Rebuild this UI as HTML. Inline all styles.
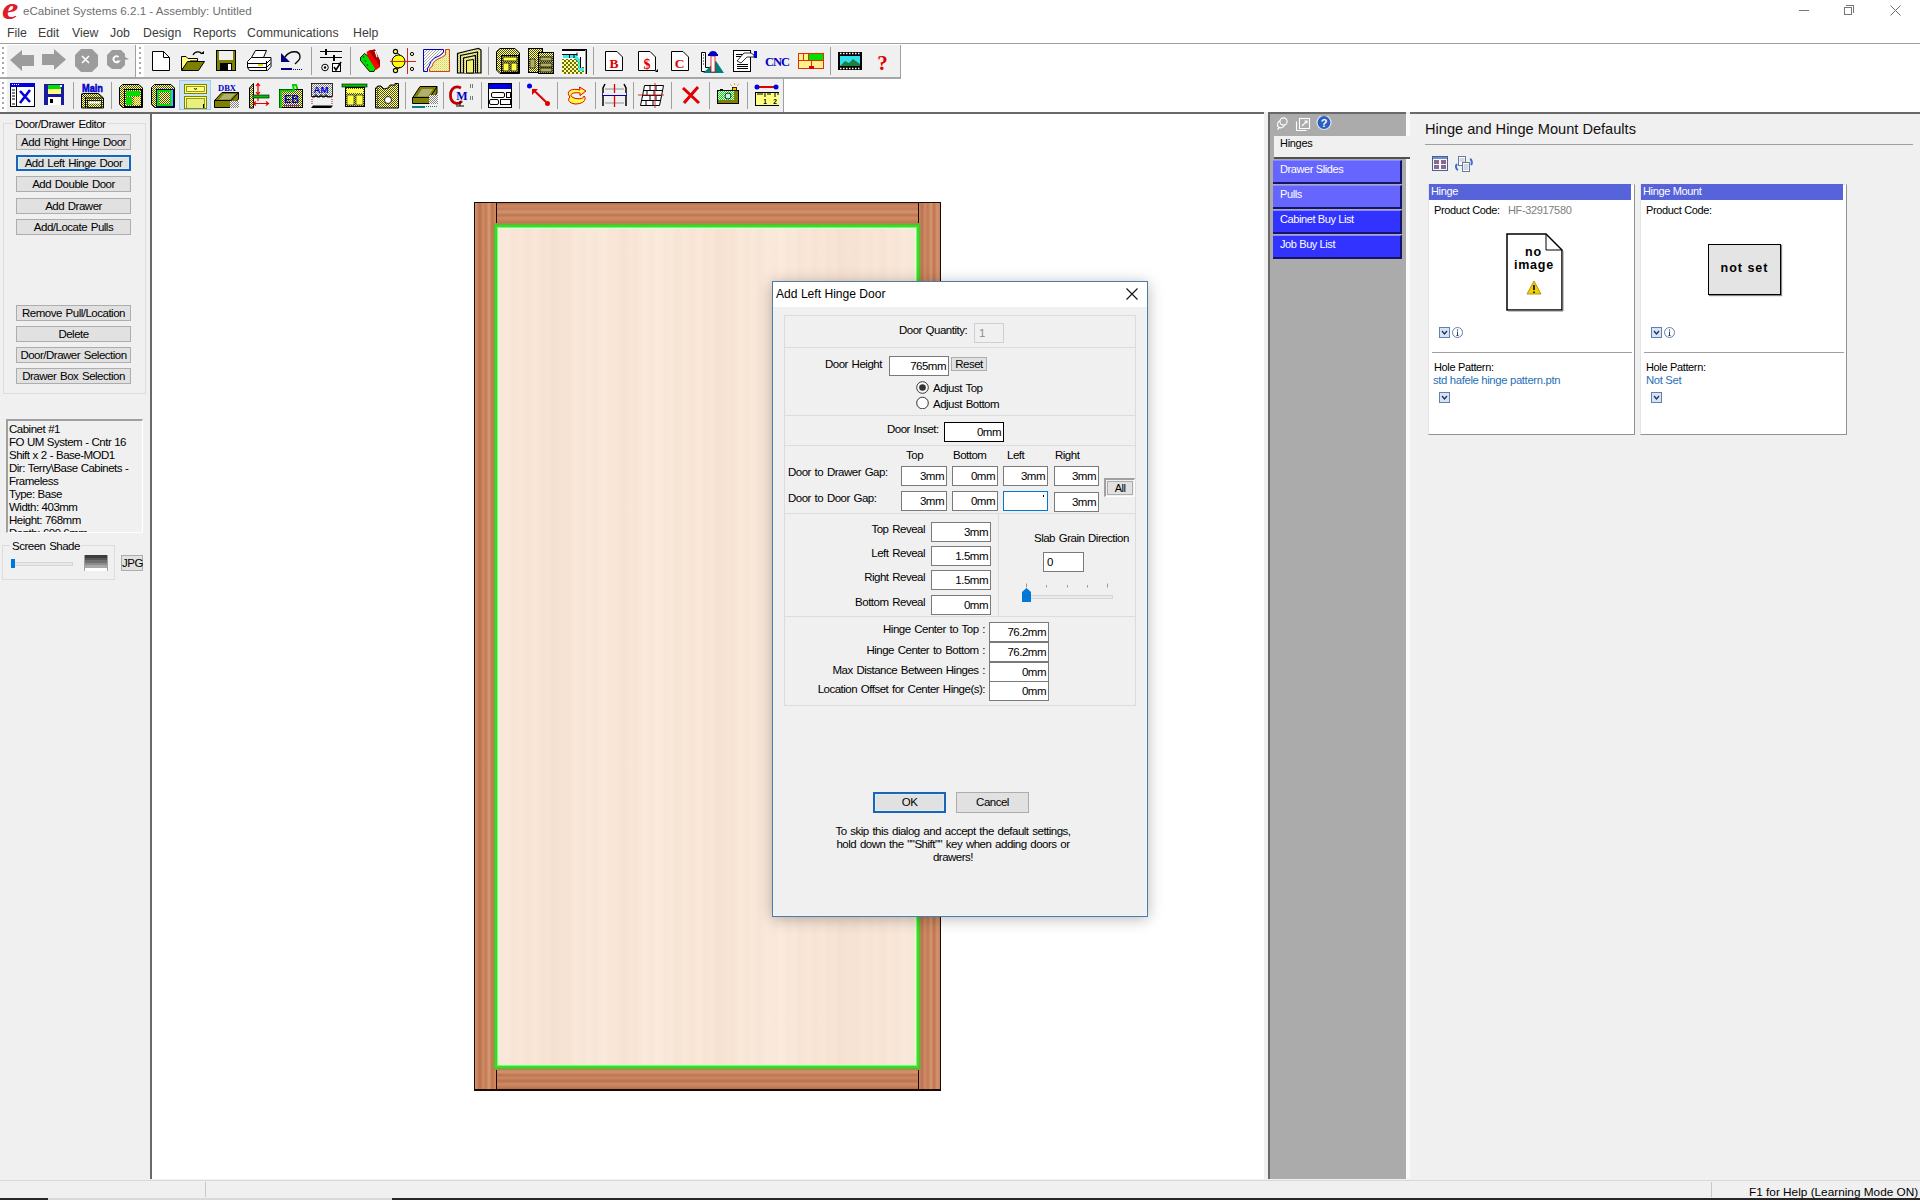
<!DOCTYPE html>
<html><head><meta charset="utf-8">
<style>
*{margin:0;padding:0;box-sizing:border-box}
html,body{width:1920px;height:1200px;overflow:hidden;background:#fff;font-family:"Liberation Sans",sans-serif;color:#000}
.a{position:absolute}
.ms{font-size:11.5px;letter-spacing:-0.5px;word-spacing:1px;line-height:13px;white-space:nowrap;margin-top:1px}
.btn{position:absolute;background:#e1e1e1;border:1px solid #adadad;font-size:11.5px;letter-spacing:-0.5px;word-spacing:1px;text-align:center;white-space:nowrap}
.tb{position:absolute;background:#fff;border:1px solid #7a7a7a;font-size:11.5px;letter-spacing:-0.5px;text-align:right;padding-right:2px;white-space:nowrap}
.sep{position:absolute;width:2px;border-left:1px solid #a0a0a0;border-right:1px solid #fff}
.bluebtn{position:absolute;left:1273px;width:129px;height:24px;color:#fff;font-size:11px;letter-spacing:-0.4px;padding-left:7px;line-height:16px;border-top:1px solid #8a8aff;border-bottom:2px solid #14146a;border-right:2px solid #14146a}
.card{position:absolute;background:#fff;border:1px solid #e4e4e4;border-right:1px solid #929292;border-bottom:1px solid #929292}
.t8{font-size:11px;letter-spacing:-0.35px;white-space:nowrap}
</style></head><body>
<!-- title bar -->
<div class="a" style="left:0;top:0;width:1920px;height:43px;background:#fff"></div>
<div class="a" style="left:2px;top:-7px;font-family:'Liberation Serif',serif;font-weight:bold;font-style:italic;font-size:32px;line-height:30px;color:#e01c2a;transform:scaleX(1.15);transform-origin:0 0">e</div>
<div class="a" style="left:23px;top:4px;font-size:11.6px;color:#6e6e6e;white-space:nowrap">eCabinet Systems 6.2.1 - Assembly: Untitled</div>
<!-- window buttons -->
<div class="a" style="left:1799px;top:10px;width:10px;height:1px;background:#777"></div>
<div class="a" style="left:1844px;top:7px;width:8px;height:8px;border:1px solid #777;background:#fff;z-index:1"></div>
<div class="a" style="left:1846px;top:5px;width:8px;height:8px;border-top:1px solid #777;border-right:1px solid #777"></div>
<svg class="a" style="left:1890px;top:5px" width="11" height="11"><path d="M0.5 0.5L10.5 10.5M10.5 0.5L0.5 10.5" stroke="#707070" stroke-width="1"/></svg>
<!-- menu -->
<div class="a" style="top:26px;font-size:12.3px;color:#3c3c3c;white-space:nowrap;left:-1px;width:400px">
<span class="a" style="left:8px">File</span><span class="a" style="left:39px">Edit</span><span class="a" style="left:73px">View</span><span class="a" style="left:111px">Job</span><span class="a" style="left:144px">Design</span><span class="a" style="left:194px">Reports</span><span class="a" style="left:248px">Communications</span><span class="a" style="left:354px">Help</span>
</div>
<div class="a" style="left:0;top:43px;width:1920px;height:1px;background:#a0a0a0"></div>

<!-- toolbars -->
<div id="toolbars">
<svg class="a" style="left:0;top:0" width="910" height="115" viewBox="0 0 910 115">
<defs>
<pattern id="dy" width="2" height="2" patternUnits="userSpaceOnUse"><rect width="2" height="2" fill="#ffffa8"/><rect width="1" height="1" fill="#505000"/><rect x="1" y="1" width="1" height="1" fill="#505000"/></pattern>
<pattern id="dy2" width="2" height="2" patternUnits="userSpaceOnUse"><rect width="2" height="2" fill="#ffff60"/><rect width="1" height="1" fill="#a0a040"/><rect x="1" y="1" width="1" height="1" fill="#c0c060"/></pattern>
<pattern id="dg" width="2" height="2" patternUnits="userSpaceOnUse"><rect width="2" height="2" fill="#fff"/><rect width="1" height="1" fill="#808080"/><rect x="1" y="1" width="1" height="1" fill="#808080"/></pattern>
<pattern id="dgr" width="2" height="2" patternUnits="userSpaceOnUse"><rect width="2" height="2" fill="#00e000"/><rect width="1" height="1" fill="#fff"/><rect x="1" y="1" width="1" height="1" fill="#fff"/></pattern>
<pattern id="hatch" width="3" height="3" patternUnits="userSpaceOnUse"><rect width="3" height="3" fill="#fff"/><path d="M0 3 L3 0" stroke="#9a9a9a" stroke-width="0.9"/></pattern>
<pattern id="dly" width="2" height="2" patternUnits="userSpaceOnUse"><rect width="2" height="2" fill="#ffff90"/><rect width="1" height="1" fill="#c8c890"/><rect x="1" y="1" width="1" height="1" fill="#e0e0b0"/></pattern>
<pattern id="dck" width="4" height="4" patternUnits="userSpaceOnUse"><rect width="4" height="4" fill="#ffffa0"/><rect width="2" height="2" fill="#707000"/><rect x="2" y="2" width="2" height="2" fill="#707000"/></pattern>
<pattern id="dol" width="2" height="2" patternUnits="userSpaceOnUse"><rect width="2" height="2" fill="#808000"/><rect width="1" height="1" fill="#b0b060"/></pattern>
</defs>
<!-- band backgrounds -->
<rect x="7" y="45" width="128" height="32" fill="#f0f0f0"/>
<rect x="144" y="45" width="756" height="32" fill="#f0f0f0"/>
<rect x="0" y="77" width="901" height="2" fill="#a6a6a6"/>
<rect x="135" y="45" width="1" height="32" fill="#a0a0a0"/>
<rect x="900" y="45" width="1" height="33" fill="#a0a0a0"/>
<rect x="7" y="79" width="776" height="33" fill="#f0f0f0"/>
<rect x="783" y="79" width="1" height="33" fill="#a0a0a0"/>
<!-- grippers -->
<g fill="#a8a8a8">
<rect x="2" y="47" width="2" height="2"/><rect x="2" y="52" width="2" height="2"/><rect x="2" y="57" width="2" height="2"/><rect x="2" y="62" width="2" height="2"/><rect x="2" y="67" width="2" height="2"/><rect x="2" y="72" width="2" height="2"/>
<rect x="139" y="47" width="2" height="2"/><rect x="139" y="52" width="2" height="2"/><rect x="139" y="57" width="2" height="2"/><rect x="139" y="62" width="2" height="2"/><rect x="139" y="67" width="2" height="2"/><rect x="139" y="72" width="2" height="2"/>
<rect x="2" y="82" width="2" height="2"/><rect x="2" y="87" width="2" height="2"/><rect x="2" y="92" width="2" height="2"/><rect x="2" y="97" width="2" height="2"/><rect x="2" y="102" width="2" height="2"/><rect x="2" y="107" width="2" height="2"/>
</g>
<!-- separators row1 -->
<g fill="#a0a0a0">
<rect x="311" y="47" width="1" height="28"/><rect x="350" y="47" width="1" height="28"/><rect x="488" y="47" width="1" height="28"/><rect x="593" y="47" width="1" height="28"/><rect x="830" y="47" width="1" height="28"/>
<rect x="73" y="82" width="1" height="27"/><rect x="111" y="82" width="1" height="27"/><rect x="405" y="82" width="1" height="27"/><rect x="443" y="82" width="1" height="27"/><rect x="481" y="82" width="1" height="27"/><rect x="519" y="82" width="1" height="27"/><rect x="557" y="82" width="1" height="27"/><rect x="595" y="82" width="1" height="27"/><rect x="633" y="82" width="1" height="27"/><rect x="671" y="82" width="1" height="27"/><rect x="709" y="82" width="1" height="27"/><rect x="747" y="82" width="1" height="27"/>
</g>
<!-- nav icons (disabled gray) -->
<g fill="#9c9c9c">
<path d="M10 60 L22 50 V55 H34 V66 H22 V71 Z"/>
<path d="M42 54 H54 V49 L66 59.5 L54 70 V65 H42 Z"/>
<path d="M81 49 H92 L98 55 V66 L92 72 H81 L75 66 V55 Z"/>
<path d="M112 50 H121 L125 54 V57 L129 59 L125 60 V65 L121 69 H112 L107 65 V55 Z"/>
</g>
<path d="M82 56 L89 63 M89 56 L82 63" stroke="#fff" stroke-width="1.6"/>
<path d="M118.5 57 A3 3 0 1 0 118.5 61.5 H116.5" stroke="#fff" stroke-width="1.8" fill="none"/>
<!-- new doc -->
<path d="M152.5 51.5 H163.5 L169.5 57.5 V70.5 H152.5 Z" fill="#fff" stroke="#000"/>
<path d="M163.5 51.5 V57.5 H169.5" fill="none" stroke="#000"/>
<!-- open folder -->
<path d="M181.5 56.5 H186 L188 58.5 H197.5 V61 H190 L181.5 70 Z" fill="#ffff80" stroke="#000"/>
<path d="M181.5 70.5 L187.5 61.5 H204.5 L198.5 70.5 Z" fill="#808000" stroke="#000"/>
<path d="M193 55 C195 51 200 51 202 54" fill="none" stroke="#000" stroke-width="1.2"/><path d="M200 54 H204 V51 Z" fill="#000"/>
<!-- save -->
<rect x="216.5" y="50.5" width="19" height="20" fill="#808000" stroke="#000"/>
<rect x="219" y="51" width="14" height="9" fill="#f0f0f0"/>
<rect x="220" y="63" width="12" height="7" fill="#000"/><rect x="228" y="64" width="3" height="6" fill="#fff"/>
<!-- printer -->
<path d="M255.5 50.5 H266.5 L263.5 57.5 H251.5 Z" fill="#fff" stroke="#000"/>
<path d="M247.5 61.5 L251.5 57.5 H271 V66.5 L267.5 70.5 H249.5 L247.5 67.5 Z" fill="#fff" stroke="#000"/>
<path d="M247.5 63.5 H266.5 L270.5 59.5 M247.5 67.5 H266.5 L270.5 63.5 M266.5 61 V70" fill="none" stroke="#000"/>
<rect x="258" y="64" width="5" height="2" fill="#e0e000"/>
<!-- undo -->
<path d="M285 57 C290 50 300 50 300 57 C300 60 297 62 295 64" fill="none" stroke="#000" stroke-width="1.3"/>
<path d="M281 53 V62 H290 Z" fill="#000080"/>
<rect x="281" y="68" width="11" height="2" fill="#000080"/>
<path d="M293 69.5 H302" stroke="#000080" stroke-width="1" stroke-dasharray="1 1"/>
<!-- settings -->
<path d="M320 51.5 H342 M320 57.5 H342" stroke="#000" stroke-width="1"/>
<rect x="325" y="49" width="2" height="6" fill="#000"/><rect x="333" y="55" width="2" height="6" fill="#000"/>
<circle cx="325" cy="67.5" r="3.3" fill="#fff" stroke="#000" stroke-width="1"/><circle cx="325" cy="67.5" r="1.2" fill="#000"/>
<rect x="332.5" y="63.5" width="8" height="8" fill="#fff" stroke="#000"/><path d="M334 67 L336 70 L341 62" stroke="#000" stroke-width="1.6" fill="none"/>
<!-- red green -->
<path d="M360.5 57.5 L364.5 53.5 L368 56 L376 68 L374 71.5 L369.5 71.5 L360.5 60.5 Z" fill="#00e000" stroke="#000" stroke-width="0.9"/>
<path d="M363 56 L364 58 M365 60 L366 62 M367 64 L368 66" stroke="#000" stroke-width="0.7"/>
<path d="M366.5 52 L369 50.5 L375 49.5 L380 61 L380 67 L376 70 L368 57 Z" fill="#ff0000"/>
<path d="M369 50.5 L375 49.5 L380 61 L380 67 L377 62 Z" fill="#a00000"/>
<path d="M374.5 51 L376 51 L377.5 57 L376.5 57.5 Z" fill="#fff"/>
<!-- sun crosshair -->
<circle cx="398.5" cy="61.5" r="6.5" fill="#ffff00" stroke="#000"/>
<path d="M396 52 L400 55 M396 70 L400 67" stroke="#000" stroke-width="1"/>
<circle cx="395.5" cy="51.5" r="2.1" fill="#ffff40" stroke="#000" stroke-width="1.1"/><circle cx="395.5" cy="70.5" r="2.1" fill="#ffff40" stroke="#000" stroke-width="1.1"/>
<path d="M390 61.5 H416 M407.5 48 V74" stroke="#c82828" stroke-width="1"/>
<circle cx="412" cy="54" r="1.6" fill="#ffffa0" stroke="#000" stroke-width="1"/><circle cx="412" cy="69" r="1.6" fill="#ffffa0" stroke="#000" stroke-width="1"/>
<!-- moulding -->
<path d="M423.5 49.5 H443.5 V52.5 L440 55.5 L434.5 58 L431 61.5 L429 66 L427.5 68.5 V71.5 H423.5 Z" fill="url(#hatch)" stroke="#0000c0"/>
<path d="M445.5 49.5 H449.5 V71.5 H429.5 V68.5 L432 66.5 L433.5 62.5 L437 59.5 L441.5 57.5 L445.5 55 Z" fill="url(#dly)" stroke="#d04010"/>
<!-- door frame -->
<path d="M457.5 73 V53.5 L469 50.5 L478.5 48.5 L481 50 V73 Z" fill="url(#dly)" stroke="#000" stroke-width="1.2"/>
<path d="M460.5 73 V55.5 L477.5 52 V73" fill="none" stroke="#000" stroke-width="1.2"/>
<path d="M463.5 73 V58 L475.5 55.5 V73" fill="url(#dly)" stroke="#000" stroke-width="1.2"/>
<path d="M466.5 73 V60.5 L473.5 59.5 V73 Z" fill="#f4f070" stroke="#000" stroke-width="1"/>
<!-- cabinet -->
<path d="M496.5 51.5 L500 48.5 H515 L519.5 53 V73.5 H500 L496.5 70 Z" fill="url(#dy)" stroke="#000"/>
<rect x="501.5" y="55.5" width="17" height="17" fill="url(#dy)" stroke="#000"/>
<rect x="503" y="57" width="14" height="4" fill="#ffff40" stroke="#000" stroke-width="0.8"/>
<rect x="503" y="63" width="6" height="8" fill="#ffff40" stroke="#000" stroke-width="0.8"/><rect x="511" y="63" width="6" height="8" fill="#ffff40" stroke="#000" stroke-width="0.8"/>
<!-- two cabinets -->
<rect x="528.5" y="48.5" width="14" height="24" fill="url(#dy)" stroke="#000"/>
<rect x="538.5" y="52.5" width="15" height="21" fill="url(#dy)" stroke="#000"/>
<rect x="540" y="57" width="12" height="4" fill="#b0b060" stroke="#000" stroke-width="0.8"/><rect x="540" y="63" width="12" height="4" fill="#b0b060" stroke="#000" stroke-width="0.8"/><rect x="540" y="68" width="12" height="4" fill="#b0b060" stroke="#000" stroke-width="0.8"/>
<rect x="530" y="59" width="5" height="9" fill="#b0b060" stroke="#000" stroke-width="0.6"/>
<!-- corner -->
<rect x="562" y="49" width="25" height="25" fill="#000"/>
<rect x="562" y="51" width="23" height="23" fill="#fff"/>
<rect x="562" y="59" width="22" height="15" fill="url(#dck)"/>
<rect x="585" y="50" width="1" height="24" fill="#9a9a9a"/>
<rect x="563" y="52" width="6" height="2" fill="#fff"/><path d="M562 54.5 H577" stroke="#000" stroke-width="1"/>
<path d="M563 56.5 H575 L580 61.5 V69.5 H584" stroke="#30f0f0" stroke-width="3" fill="none"/>
<path d="M569.5 55 V58 M574 55 V58" stroke="#000" stroke-width="1"/>
<rect x="581" y="57" width="3" height="10" fill="#fff"/><path d="M580.5 57 V68 M577 52.5 V56" stroke="#000" stroke-width="1"/>
<!-- B $ C docs -->
<g fill="#fff" stroke="#000">
<path d="M605.5 51.5 H617 L622.5 57 V70.5 H605.5 Z"/><path d="M638.5 51.5 H650 L655.5 57 V70.5 H638.5 Z"/><path d="M671.5 51.5 H683 L688.5 57 V70.5 H671.5 Z"/>
</g>
<g font-family="Liberation Serif" font-weight="bold" fill="#e00000" text-anchor="middle">
<text x="614" y="68" font-size="13.5">B</text><text x="647" y="68.5" font-size="14">$</text><text x="679.5" y="68" font-size="13.5">C</text>
</g>
<path d="M655 72 L658 69 V72 Z" fill="#000"/>
<!-- square ruler + pillar -->
<path d="M701.5 52.5 H705.5 V67.5 H712 V71.5 H701.5 Z" fill="#fff" stroke="#000"/>
<path d="M703 55H704M703 58H704M703 61H704M703 64H704" stroke="#000"/>
<path d="M703 73 L716 61 L724 73 Z" fill="#008080"/>
<rect x="711" y="56" width="4" height="16" fill="#fff" stroke="#e00000" stroke-width="0.8"/>
<path d="M709 54 C709 50 717 50 717 54 V56 H709 Z" fill="#0000c0"/>
<rect x="708" y="54" width="10" height="2" fill="#0000c0"/>
<!-- edit doc hand -->
<rect x="733.5" y="50.5" width="17" height="21" fill="#fff" stroke="#000"/>
<path d="M736 54.5H743M736 56.5H741M737 64.5H748M737 66.5H748M737 68.5H748" stroke="#000"/>
<path d="M737 61 L744 53 H751 L754 55 V57 H747 L741 63 Z" fill="#fff" stroke="#000" stroke-width="0.8"/>
<rect x="754" y="51" width="3" height="7" fill="#0000e0"/>
<!-- CNC -->
<text x="777.5" y="65.5" font-family="Liberation Serif" font-weight="bold" font-size="12.5" fill="#0000c0" text-anchor="middle" textLength="25">CNC</text>
<!-- layout -->
<rect x="798.5" y="53.5" width="25" height="15" fill="#fff090" stroke="#e03000"/>
<rect x="809" y="54" width="14" height="6" fill="#00e000"/>
<path d="M798 60.5 H824 M803.5 54 V60 M808.5 54 V60 M811.5 61 V67" stroke="#e03000" stroke-width="1"/>
<rect x="809" y="66" width="5" height="3" fill="#e00000"/>
<!-- film -->
<rect x="838" y="52" width="24" height="18" fill="#000"/>
<rect x="840" y="56" width="20" height="10" fill="#30e0f0"/>
<path d="M840 66 L845 61 L849 63 L853 59 L860 64 V66 Z" fill="#208040"/>
<path d="M840 53.5 H860 M840 68.5 H860" stroke="#fff" stroke-width="1.4" stroke-dasharray="1.5 1.5"/>
<!-- ? -->
<text x="882.5" y="69.5" font-family="Liberation Serif" font-weight="bold" font-size="21" fill="#e00000" text-anchor="middle">?</text>

<!-- row 2 -->
<!-- highlighted button bg -->
<rect x="179.5" y="80.5" width="31" height="29" fill="#cde3f6" stroke="#a4cbef"/>
<!-- X window -->
<rect x="10.5" y="83.5" width="24" height="23" fill="#fff" stroke="#000"/>
<rect x="10" y="83" width="25" height="4" fill="#0000e0"/>
<path d="M12 84.5H13M14 84.5H15M16 84.5H17M18 84.5H19" stroke="#fff"/>
<path d="M16.5 87 V106" stroke="#000"/><path d="M12 90H15M12 93H15M12 96H15M12 99H15M12 104H15" stroke="#000"/>
<path d="M20 91 L30 102 M30 90 L20 103" stroke="#0000e0" stroke-width="2.6"/>
<!-- blue floppy -->
<rect x="44" y="84" width="20" height="21" fill="#1a1aa0"/>
<rect x="48" y="85" width="13" height="4" fill="#00e000"/><rect x="48" y="89" width="13" height="5" fill="#ffff80"/>
<rect x="48" y="97" width="13" height="8" fill="#fff"/><rect x="50" y="99" width="3" height="4" fill="#000"/>
<rect x="60" y="85" width="2" height="2" fill="#fff"/>
<!-- Main -->
<text x="92.5" y="91.5" font-family="Liberation Sans" font-weight="bold" font-size="11" fill="#0000c8" stroke="#0000c8" stroke-width="0.5" text-anchor="middle" textLength="21" lengthAdjust="spacingAndGlyphs">Main</text>
<path d="M81.5 108 V94 L82.5 93.5 H98.5 L103.5 98 V108 Z" fill="url(#dy)" stroke="#000"/>
<path d="M82 94 L86 98 H103 M85.5 98 V108" fill="none" stroke="#000"/>
<rect x="87.5" y="100.5" width="14" height="7" fill="url(#dy)" stroke="#000" stroke-width="0.8"/><rect x="88.5" y="101.5" width="12" height="2" fill="#fff"/>
<!-- cabinet 1 -->
<path d="M119.5 87.5 L122.5 84.5 H139 L142.5 88 V107.5 H122.5 L119.5 104.5 Z" fill="url(#dy)" stroke="#000"/>
<rect x="124.5" y="89.5" width="17" height="17" fill="url(#dy)" stroke="#000"/>
<rect x="126" y="91" width="14" height="5" fill="#00e000"/><rect x="126" y="97" width="6" height="8" fill="#00e000"/><rect x="134" y="97" width="6" height="8" fill="url(#dy2)"/>
<!-- cabinet 2 -->
<path d="M151.5 87.5 L154.5 84.5 H171 L174.5 88 V107.5 H154.5 L151.5 104.5 Z" fill="url(#dy)" stroke="#000"/>
<rect x="156.5" y="89.5" width="17" height="17" fill="#00e000" stroke="#000080"/>
<rect x="159" y="92" width="11" height="12" fill="url(#dy)"/><rect x="171" y="90" width="2" height="16" fill="#40c0c0"/>
<!-- drawer -->
<rect x="184.5" y="84.5" width="22" height="9" fill="#ffff80" stroke="#808000"/><rect x="186.5" y="86.5" width="18" height="5" fill="#ffff80" stroke="#808000" stroke-width="0.8"/>
<path d="M194 88.5 Q195.5 90 197 88.5" stroke="#000" fill="none"/>
<rect x="184.5" y="96.5" width="22" height="12" fill="#ffff80" stroke="#808000"/><rect x="186.5" y="98.5" width="18" height="10" fill="#e8f080" stroke="#808000" stroke-width="0.8"/>
<rect x="203" y="104" width="1" height="4" fill="#000"/>
<!-- DBX -->
<text x="227" y="90.5" font-family="Liberation Serif" font-weight="bold" font-size="8" fill="#0000c0" text-anchor="middle" textLength="18" lengthAdjust="spacingAndGlyphs">DBX</text>
<path d="M214.5 100.5 L222 92.5 H238.5 V99 L230.5 107.5 H214.5 Z" fill="#808000" stroke="#000"/>
<path d="M214.5 100.5 H231 L238.5 92.5 M231 100.5 V107.5" fill="none" stroke="#000"/>
<path d="M219 99.5 L224 94 H235 L230 99.5 Z" fill="#b0b070"/>
<rect x="230" y="101" width="9" height="7" fill="url(#dg)"/>
<!-- side arrows -->
<path d="M249.5 88 L253.5 83.5 V108 H249.5 Z" fill="url(#dy)" stroke="#000"/>
<rect x="253" y="95" width="16" height="3" fill="#00c000" stroke="#000" stroke-width="0.6"/>
<path d="M258 84 V95 M258 98 V101 M256 86 L258 83.5 L260 86 M256 92 L258 94.5 L260 92 M254 103.5 H268 M256 101.5 L253.5 103.5 L256 105.5 M266 101.5 L268.5 103.5 L266 105.5" stroke="#e00000" stroke-width="1.2" fill="none"/>
<!-- EB -->
<rect x="279.5" y="89.5" width="23" height="18" fill="url(#dy)" stroke="#000"/>
<path d="M280.5 108 V90.5 H294 L293 85 H296 L297.5 89" fill="none" stroke="#00d000" stroke-width="2"/>
<text x="291.5" y="103" font-family="Liberation Sans" font-weight="bold" font-size="10" fill="#0000c0" text-anchor="middle" textLength="15" lengthAdjust="spacingAndGlyphs">EB</text>
<rect x="284" y="105" width="15" height="1.2" fill="#a020a0"/>
<!-- AM -->
<rect x="311.5" y="83.5" width="21" height="13" fill="url(#dg)" stroke="#000" stroke-width="0.8"/>
<text x="321" y="93" font-family="Liberation Sans" font-weight="bold" font-size="9.5" fill="#0000e0" text-anchor="middle" textLength="15" lengthAdjust="spacingAndGlyphs">AM</text>
<path d="M312 97 H315 V95 H317 V97 H320 V95 H322 V97 H325 V95 H327 V97 H332" stroke="#000" fill="none" stroke-width="0.9"/>
<path d="M312 99 V104 M332 99 V104" stroke="#e00000" stroke-dasharray="1 1"/>
<path d="M311 108 L313 105.5 H333 L331 108 Z" fill="#000"/>
<!-- cabinet front green top -->
<rect x="342" y="84" width="25" height="3" fill="#00c000" stroke="#000" stroke-width="0.6"/>
<rect x="345.5" y="87.5" width="19" height="19" fill="url(#dy)" stroke="#000"/>
<rect x="347" y="89" width="16" height="4" fill="#ffff40"/><rect x="347" y="95" width="7" height="10" fill="#ffff40" stroke="#000" stroke-width="0.6"/><rect x="356" y="95" width="7" height="10" fill="#ffff40" stroke="#000" stroke-width="0.6"/>
<!-- pillar -->
<path d="M375.5 108 V88 L378 86 H381 L384 89 L388 88 L390 85 H395 V83.5 H398.5 V108 Z" fill="url(#dy)" stroke="#000"/>
<path d="M378 88 V107" stroke="#000" stroke-dasharray="1 1"/>
<circle cx="388" cy="100" r="3.5" fill="#fff" stroke="#000" stroke-width="0.8"/>
<!-- tray -->
<path d="M412.5 98 L420 86.5 H437 V93 L430.5 103.5 H412.5 Z" fill="#808000" stroke="#000"/>
<path d="M412.5 97.5 H430 L437 86.5 M430 97.5 V103.5" fill="none" stroke="#000"/>
<path d="M417 96.5 L422 89 H433 L428 96.5 Z" fill="#b0b070"/>
<rect x="429" y="95" width="9" height="9" fill="url(#dg)"/>
<rect x="412" y="106" width="13" height="2" fill="#008080"/><path d="M426 106.5 H437" stroke="#008080" stroke-dasharray="1 1"/>
<!-- CM -->
<path d="M461 88 C453 84 449 92 451 99 C453 104 459 105 462 101" fill="none" stroke="#c00000" stroke-width="2.8"/>
<text x="462" y="100" font-family="Liberation Serif" font-weight="bold" font-size="12" fill="#0000c0" text-anchor="middle">M</text>
<path d="M460 101 V106 M456 106 H464" stroke="#000" stroke-width="1"/>
<path d="M470 85H473M470 87H473M470 97H473M470 99H473" stroke="#000" stroke-dasharray="1 1"/>
<!-- CON -->
<rect x="488.5" y="83.5" width="23" height="24" fill="#fff" stroke="#000"/>
<rect x="489" y="84" width="22" height="5" fill="#0000e0"/>
<rect x="491.5" y="92.5" width="13" height="5" rx="1.5" fill="#fff" stroke="#000"/><rect x="506.5" y="92.5" width="4" height="5" fill="#fff" stroke="#000"/>
<rect x="489.5" y="99.5" width="9" height="5" rx="1.5" fill="#fff" stroke="#000"/><rect x="500.5" y="99.5" width="10" height="5" fill="#fff" stroke="#000"/>
<!-- arrow dots -->
<circle cx="529.5" cy="86" r="2.5" fill="#0000e0"/><circle cx="547.5" cy="103.5" r="2.5" fill="#e00000"/>
<path d="M533 89.5 L546 102" stroke="#e00000" stroke-width="2"/><path d="M532 89 H538 L532 95 Z" fill="#e00000"/>
<!-- rotate -->
<path d="M570 97 C565 91 572 88 580 90 L579.5 87 L586 91 L580 95.5 V93 C573 92 569 94 572 97 C577 100 584 99 584 96 C587 99 584 104 575 104 C569 103 567 100 570 97 Z" fill="#ffff40" stroke="#e00000" stroke-width="1"/>
<!-- lines -->
<path d="M605 84 L603 88 V106 M624 84 L626 88 V106" stroke="#000" stroke-width="1.5" fill="none"/>
<path d="M605 89H624M605 103H624" stroke="#909090"/>
<path d="M602 95.5 H627" stroke="#0000c0"/><path d="M614.5 84 V107" stroke="#e00000" stroke-width="1.3"/>
<rect x="603" y="93" width="23" height="2" fill="#f0f0f0"/><path d="M602 95.5 H627" stroke="#0000c0"/>
<!-- grid -->
<path d="M644.5 85.5 H663.5 L661.5 96 L659.5 105.5 H640.5 L642.5 96 Z" fill="#fff" stroke="#000"/>
<path d="M643 90.5H662M642.5 95.5H661.5M641.5 100.5H660.5M650 85V90M656 85V90M647 91V95M654 91V95M650 96V100M656 96V100M646 101V105M653 101V105" stroke="#000" stroke-width="1"/>
<path d="M638 95 H664 M655 83 V108" stroke="#c02020" stroke-width="0.9"/>
<!-- red X -->
<path d="M683 88 L699 103 M698 87 L684 103" stroke="#e00000" stroke-width="3"/>
<!-- camera -->
<rect x="717.5" y="90.5" width="21" height="13" fill="url(#dgr)" stroke="#000"/>
<rect x="734" y="91" width="4" height="12" fill="#808000"/><rect x="718" y="100" width="20" height="3" fill="#808000"/>
<rect x="720" y="89" width="3" height="2" fill="#000"/><rect x="732.5" y="87.5" width="4" height="3" fill="#ffc000" stroke="#000" stroke-width="0.8"/>
<circle cx="728" cy="96" r="3" fill="#c0f0f0" stroke="#000" stroke-width="0.8"/>
<path d="M730 84 L732 86 M734.5 83 V85 M739 84 L737 86" stroke="#e0a000" stroke-width="0.8"/>
<!-- ruler -->
<path d="M757 87 H776" stroke="#e00000" stroke-width="2"/>
<circle cx="757" cy="87" r="2.5" fill="#0000e0"/><circle cx="776" cy="87" r="2.5" fill="#0000e0"/>
<rect x="755" y="92" width="24" height="14" fill="#ffff80"/>
<path d="M755 92.5 H779 M755.5 92 V105 M755 105.5 H779" stroke="#000"/>
<path d="M758 93V95M760 93V95M762 93V95M765 93V97M768 93V95M770 93V95M775 93V97M778 93V95" stroke="#000"/>
<text x="765" y="104" font-family="Liberation Sans" font-weight="bold" font-size="6.5" text-anchor="middle">1</text><text x="775" y="104" font-family="Liberation Sans" font-weight="bold" font-size="6.5" text-anchor="middle">2</text>
</svg>
</div>

<!-- main area -->
<div class="a" style="left:0;top:112px;width:1920px;height:1069px;background:#f0f0f0"></div>
<div class="a" style="left:0;top:112px;width:1270px;height:2px;background:#696969"></div>
<!-- viewport -->
<div class="a" style="left:150px;top:112px;width:1114px;height:1067px;background:#fff;border-left:2px solid #696969;border-top:2px solid #696969"></div>
<div class="a" style="left:1264px;top:112px;width:4px;height:1067px;background:#f0f0f0"></div>
<!-- right sidebar -->
<div class="a" style="left:1268px;top:112px;width:138px;height:1067px;background:#ababab;border-left:2px solid #696969;border-top:2px solid #696969"></div>
<div class="a" style="left:1406px;top:114px;width:4px;height:1065px;background:#fafafa"></div>
<div class="a" style="left:1410px;top:112px;width:510px;height:2px;background:#696969"></div>

<!-- left panel -->
<div id="leftpanel">
<div class="a" style="left:3px;top:123px;width:143px;height:271px;border:1px solid #dcdcdc"></div>
<div class="a ms" style="left:13px;top:117px;background:#f0f0f0;padding:0 2px">Door/Drawer Editor</div>
<div class="btn" style="left:16px;top:134px;width:115px;height:16px;line-height:14px">Add Right Hinge Door</div>
<div class="btn" style="left:16px;top:155px;width:115px;height:16px;line-height:12px;border:2px solid #1a65b5;box-shadow:inset 0 0 0 1px #d4f0ff">Add Left Hinge Door</div>
<div class="btn" style="left:16px;top:176px;width:115px;height:16px;line-height:14px">Add Double Door</div>
<div class="btn" style="left:16px;top:198px;width:115px;height:16px;line-height:14px">Add Drawer</div>
<div class="btn" style="left:16px;top:219px;width:115px;height:16px;line-height:14px">Add/Locate Pulls</div>
<div class="btn" style="left:16px;top:305px;width:115px;height:16px;line-height:14px">Remove Pull/Location</div>
<div class="btn" style="left:16px;top:326px;width:115px;height:16px;line-height:14px">Delete</div>
<div class="btn" style="left:16px;top:347px;width:115px;height:16px;line-height:14px">Door/Drawer Selection</div>
<div class="btn" style="left:16px;top:368px;width:115px;height:16px;line-height:14px">Drawer Box Selection</div>
<!-- info box -->
<div class="a" style="left:6px;top:419px;width:137px;height:114px;border-top:2px solid #a0a0a0;border-left:2px solid #a0a0a0;border-right:1px solid #fff;border-bottom:1px solid #fff;overflow:hidden">
<div class="ms" style="position:absolute;left:1px;top:1px;line-height:13px;word-spacing:0.3px">Cabinet #1<br>FO UM System - Cntr 16<br>Shift x 2 - Base-MOD1<br>Dir: Terry\Base Cabinets -<br>Frameless<br>Type: Base<br>Width: 403mm<br>Height: 768mm<br>Depth: 609.6mm</div>
</div>
<!-- screen shade -->
<div class="a" style="left:2px;top:545px;width:113px;height:35px;border:1px solid #dcdcdc"></div>
<div class="a ms" style="left:10px;top:539px;background:#f0f0f0;padding:0 2px">Screen Shade</div>
<div class="a" style="left:11px;top:562px;width:62px;height:4px;background:#e7eaea;border:1px solid #d6d6d6"></div>
<div class="a" style="left:11px;top:559px;width:4px;height:9px;background:#0078d7"></div>
<div class="a" style="left:84px;top:555px;width:24px;height:16px;border-left:1px solid #a0a0a0;border-right:1px solid #a0a0a0;background:linear-gradient(180deg,#3c3c3c 0px,#3c3c3c 3px,#55555c 3px,#55555c 5px,#6e6e74 5px,#6e6e74 8px,#8c8c8c 8px,#8c8c8c 10px,#a8a8a8 10px,#a8a8a8 13px,#fff 13px)"></div>
<div class="btn" style="left:121px;top:555px;width:22px;height:16px;line-height:14px">JPG</div>
</div>

<!-- right panel -->
<div id="rightpanel">
<!-- sidebar header icons -->
<svg class="a" style="left:1273px;top:116px" width="60" height="16" viewBox="0 0 60 16">
<g fill="none" stroke="#fff" stroke-width="1.1">
<circle cx="10.5" cy="5.5" r="3.6"/><path d="M7.3 4.5 C4.5 5.5 3.5 9 5.5 11 C7.5 12.5 10 12 11.5 9.3 M6 12 L4.5 13.5"/>
<rect x="26.5" y="2.5" width="10" height="10"/><path d="M23.5 5.5 V14.5 H33.5 M29 10 L34 5 M31.5 5 H34 V7.5"/>
</g>
<circle cx="51" cy="6.5" r="7" fill="#2b5fc0" stroke="#dbe6f5" stroke-width="1.2"/>
<text x="51" y="11" font-family="Liberation Sans" font-weight="bold" font-size="11" fill="#fff" text-anchor="middle">?</text>
</svg>
<div class="a" style="left:1274px;top:136px;width:136px;height:23px;background:#f0f0f0;border-bottom:2px solid #505050"></div>
<div class="a" style="left:1280px;top:137px;font-size:11px;letter-spacing:-0.3px;line-height:13px">Hinges</div>
<div class="bluebtn" style="top:160px;background:#6666ff">Drawer Slides</div>
<div class="bluebtn" style="top:185px;background:#6666ff">Pulls</div>
<div class="bluebtn" style="top:210px;background:#3333ff">Cabinet Buy List</div>
<div class="bluebtn" style="top:235px;background:#3333ff">Job Buy List</div>

<!-- content -->
<div class="a" style="left:1425px;top:121px;font-size:14.6px;white-space:nowrap;color:#111">Hinge and Hinge Mount Defaults</div>
<div class="a" style="left:1425px;top:144px;width:488px;height:1px;background:#a0a0a0"></div>
<!-- small toolbar icons -->
<svg class="a" style="left:1432px;top:156px" width="44" height="16" viewBox="0 0 44 16">
<rect x="0.5" y="0.5" width="15" height="14" fill="#f4f7fb" stroke="#4a5f8c"/><rect x="1" y="1" width="14" height="2" fill="#6f8fd0"/>
<rect x="2" y="4" width="5" height="4" fill="#8a6a88"/><rect x="9" y="4" width="5" height="4" fill="#8a6a88"/>
<rect x="2" y="9" width="5" height="4" fill="#8a6a88"/><rect x="9" y="9" width="5" height="4" fill="#8a6a88"/>
<rect x="26.5" y="0.5" width="7" height="9" fill="#fff" stroke="#6a7a9a"/><rect x="30.5" y="6.5" width="7" height="9" fill="#fff" stroke="#6a7a9a"/>
<path d="M27.5 3H32.5M27.5 5H32.5M31.5 9H36.5M31.5 11H36.5M31.5 13H36.5" stroke="#8a9abb" stroke-width="0.8"/>
<path d="M38 3 C40 4 40.5 7 39 9" stroke="#3b6fd6" stroke-width="2" fill="none"/><path d="M25 8 C23 10 24 13 26 14" stroke="#3b6fd6" stroke-width="2" fill="none"/>
</svg>

<!-- hinge card -->
<div class="card" style="left:1428px;top:184px;width:207px;height:251px"></div>
<div class="a" style="left:1429px;top:184px;width:202px;height:16px;background:#5763d8;color:#fff;font-size:11px;letter-spacing:-0.35px;line-height:14px;padding-left:2px">Hinge</div>
<div class="a t8" style="left:1434px;top:204px;line-height:13px">Product Code:</div>
<div class="a t8" style="left:1508px;top:204px;line-height:13px;color:#808080">HF-32917580</div>
<svg class="a" style="left:1504px;top:231px" width="62" height="82" viewBox="0 0 62 82">
<path d="M3 3 H42 L58 19 V79 H3 Z" fill="#fff" stroke="#000" stroke-width="1.5"/>
<path d="M42 3 V19 H58" fill="none" stroke="#000" stroke-width="1"/>
<path d="M4 80 H59 V20" fill="none" stroke="#888" stroke-width="1"/>
<text x="29.5" y="25" font-family="Liberation Sans" font-weight="bold" font-size="12.5" letter-spacing="0.8" text-anchor="middle">no</text>
<text x="30" y="38" font-family="Liberation Sans" font-weight="bold" font-size="12.5" letter-spacing="0.8" text-anchor="middle">image</text>
<path d="M30 50 L37 63 H23 Z" fill="#f5d000" stroke="#a08000" stroke-width="0.8"/>
<path d="M30 54 V59 M30 60.5 V62" stroke="#000" stroke-width="1.6"/>
</svg>
<svg class="a" style="left:1439px;top:327px" width="28" height="12" viewBox="0 0 28 12">
<rect x="0.5" y="0.5" width="10" height="10" fill="#d8e4f4" stroke="#6080b0"/><path d="M3 4 L5.5 7 L8 4" stroke="#203060" stroke-width="1.3" fill="none"/>
<circle cx="18.5" cy="5.5" r="5" fill="#fff" stroke="#6080b0"/><path d="M18.5 4.5V8.5M17.5 8.5H19.5" stroke="#304070" stroke-width="1"/><circle cx="18.5" cy="3" r="0.7" fill="#304070"/>
</svg>
<div class="a" style="left:1432px;top:352px;width:200px;height:1px;background:#a0a0a0"></div>
<div class="a t8" style="left:1434px;top:361px;line-height:13px">Hole Pattern:</div>
<div class="a t8" style="left:1433px;top:374px;line-height:13px;color:#2a6fb8;font-size:11.3px">std hafele hinge pattern.ptn</div>
<svg class="a" style="left:1439px;top:392px" width="12" height="12" viewBox="0 0 12 12">
<rect x="0.5" y="0.5" width="10" height="10" fill="#d8e4f4" stroke="#6080b0"/><path d="M3 4 L5.5 7 L8 4" stroke="#203060" stroke-width="1.3" fill="none"/>
</svg>

<!-- hinge mount card -->
<div class="card" style="left:1640px;top:184px;width:207px;height:251px"></div>
<div class="a" style="left:1641px;top:184px;width:202px;height:16px;background:#5763d8;color:#fff;font-size:11px;letter-spacing:-0.35px;line-height:14px;padding-left:2px">Hinge Mount</div>
<div class="a t8" style="left:1646px;top:204px;line-height:13px">Product Code:</div>
<div class="a" style="left:1708px;top:244px;width:73px;height:51px;background:#e4e4e4;border:1.5px solid #000;box-shadow:1px 1px 1px #888;font-family:'Liberation Sans',sans-serif;font-weight:bold;font-size:12.5px;letter-spacing:1px;text-align:center;line-height:47px">not set</div>
<svg class="a" style="left:1651px;top:327px" width="28" height="12" viewBox="0 0 28 12">
<rect x="0.5" y="0.5" width="10" height="10" fill="#d8e4f4" stroke="#6080b0"/><path d="M3 4 L5.5 7 L8 4" stroke="#203060" stroke-width="1.3" fill="none"/>
<circle cx="18.5" cy="5.5" r="5" fill="#fff" stroke="#6080b0"/><path d="M18.5 4.5V8.5M17.5 8.5H19.5" stroke="#304070" stroke-width="1"/><circle cx="18.5" cy="3" r="0.7" fill="#304070"/>
</svg>
<div class="a" style="left:1644px;top:352px;width:200px;height:1px;background:#a0a0a0"></div>
<div class="a t8" style="left:1646px;top:361px;line-height:13px">Hole Pattern:</div>
<div class="a t8" style="left:1646px;top:374px;line-height:13px;color:#2a6fb8;font-size:11.3px">Not Set</div>
<svg class="a" style="left:1651px;top:392px" width="12" height="12" viewBox="0 0 12 12">
<rect x="0.5" y="0.5" width="10" height="10" fill="#d8e4f4" stroke="#6080b0"/><path d="M3 4 L5.5 7 L8 4" stroke="#203060" stroke-width="1.3" fill="none"/>
</svg>
</div>

<!-- cabinet -->
<div id="cabinet">
<div class="a" style="left:474px;top:202px;width:467px;height:889px;background:#1a0a05"></div>
<!-- left side -->
<div class="a" style="left:475px;top:203px;width:21px;height:886px;background:repeating-linear-gradient(90deg,#d49470 0px,#c98560 2px,#b8704c 5px,#cf8a64 8px,#c27c56 11px,#d89a74 14px,#bd754f 17px,#d08c66 21px)"></div>
<!-- right side -->
<div class="a" style="left:919px;top:203px;width:21px;height:886px;background:repeating-linear-gradient(90deg,#c98862 0px,#b87250 3px,#d08c66 6px,#c07a55 9px,#d69872 12px,#bb7450 15px,#d4946e 18px,#c8845e 21px)"></div>
<!-- top rail -->
<div class="a" style="left:497px;top:203px;width:421px;height:21px;background:repeating-linear-gradient(180deg,#b46e4a 0px,#cc8862 3px,#c27c58 6px,#d49470 9px,#bd764f 12px,#d08c66 15px,#c47e58 18px,#b8724e 21px)"></div>
<!-- bottom rail -->
<div class="a" style="left:497px;top:1069px;width:421px;height:20px;background:repeating-linear-gradient(180deg,#c47e58 0px,#d49470 3px,#bd764f 6px,#cc8862 9px,#b8724e 12px,#d08c66 15px,#c27c58 18px,#b46e4a 20px)"></div>
<!-- door -->
<div class="a" style="left:493px;top:223px;width:428px;height:847px;border:1px solid #a09048;box-shadow:inset 0 0 0 1px #5cb830,inset 0 0 0 3px #40d82c,inset 0 0 0 4px #70ff70,inset 0 0 0 5px #dcffcc;background:linear-gradient(90deg,rgba(235,205,185,0) 0px,rgba(235,205,185,0.25) 60px,rgba(235,205,185,0) 110px,rgba(235,205,185,0.25) 128px,rgba(235,205,185,0) 150px,rgba(235,205,185,0.2) 230px,rgba(235,205,185,0) 280px,rgba(235,205,185,0.25) 350px,rgba(235,205,185,0.1) 400px),repeating-linear-gradient(90deg,#fcecde 0px,#f9e8da 7px,#fbebdd 13px,#f8e6d8 19px,#fbeadc 27px,#f9e7d9 34px,#fcecde 41px)"></div>
</div>

<!-- dialog -->
<div id="dialog">
<div class="a" style="left:772px;top:281px;width:376px;height:636px;background:#f0f0f0;border:1px solid #4f7aa6;box-shadow:0 2px 14px rgba(0,0,0,0.28)"></div>
<div class="a" style="left:773px;top:282px;width:374px;height:634px;border:1px solid #e9f6fc;border-top:none"></div>
<div class="a" style="left:773px;top:282px;width:374px;height:25px;background:#fff"></div>
<div class="a" style="left:776px;top:287px;font-size:12.1px;white-space:nowrap;color:#000">Add Left Hinge Door</div>
<svg class="a" style="left:1126px;top:288px" width="12" height="12"><path d="M0.5 0.5L11.5 11.5M11.5 0.5L0.5 11.5" stroke="#111" stroke-width="1.1"/></svg>

<!-- group boxes (etched lines) -->
<div class="a" style="left:784px;top:315px;width:352px;height:391px;border:1px solid #dcdcdc"></div>
<div class="a" style="left:785px;top:347px;width:350px;height:1px;background:#dcdcdc"></div>
<div class="a" style="left:785px;top:415px;width:350px;height:1px;background:#dcdcdc"></div>
<div class="a" style="left:785px;top:445px;width:350px;height:1px;background:#dcdcdc"></div>
<div class="a" style="left:785px;top:513px;width:350px;height:1px;background:#dcdcdc"></div>
<div class="a" style="left:998px;top:514px;width:1px;height:102px;background:#dcdcdc"></div>
<div class="a" style="left:785px;top:616px;width:350px;height:1px;background:#dcdcdc"></div>

<div class="a ms" style="left:899px;top:323px">Door Quantity:</div>
<div class="tb" style="left:974px;top:323px;width:30px;height:20px;border-color:#cfcfcf;color:#8a8a8a;text-align:left;padding-left:4px;line-height:19px;background:#f0f0f0">1</div>

<div class="a ms" style="left:825px;top:357px">Door Height</div>
<div class="tb" style="left:889px;top:356px;width:60px;height:20px;line-height:18px">765mm</div>
<div class="btn" style="left:951px;top:357px;width:36px;height:14px;line-height:12px">Reset</div>
<!-- radios -->
<svg class="a" style="left:916px;top:381px" width="14" height="28" viewBox="0 0 14 28">
<circle cx="6.5" cy="6.5" r="5.8" fill="#fff" stroke="#333" stroke-width="1"/><circle cx="6.5" cy="6.5" r="3.3" fill="#333"/>
<circle cx="6.5" cy="22" r="5.8" fill="#fff" stroke="#333" stroke-width="1"/>
</svg>
<div class="a ms" style="left:933px;top:381px">Adjust Top</div>
<div class="a ms" style="left:933px;top:397px">Adjust Bottom</div>

<div class="a ms" style="left:887px;top:422px">Door Inset:</div>
<div class="tb" style="left:944px;top:422px;width:60px;height:20px;line-height:18px;border-color:#000">0mm</div>

<div class="a ms" style="left:906px;top:448px">Top</div>
<div class="a ms" style="left:953px;top:448px">Bottom</div>
<div class="a ms" style="left:1007px;top:448px">Left</div>
<div class="a ms" style="left:1055px;top:448px">Right</div>
<div class="a ms" style="left:788px;top:465px">Door to Drawer Gap:</div>
<div class="a ms" style="left:788px;top:491px">Door to Door Gap:</div>
<div class="tb" style="left:901px;top:466px;width:46px;height:20px;line-height:19px">3mm</div>
<div class="tb" style="left:952px;top:466px;width:46px;height:20px;line-height:19px">0mm</div>
<div class="tb" style="left:1003px;top:466px;width:45px;height:20px;line-height:19px">3mm</div>
<div class="tb" style="left:1054px;top:466px;width:45px;height:20px;line-height:19px">3mm</div>
<div class="tb" style="left:901px;top:491px;width:46px;height:20px;line-height:19px">3mm</div>
<div class="tb" style="left:952px;top:491px;width:46px;height:20px;line-height:19px">0mm</div>
<div class="tb" style="left:1003px;top:491px;width:45px;height:20px;line-height:19px;border-color:#0078d7"></div>
<div class="a" style="left:1043px;top:495px;width:1px;height:2px;background:#000"></div>
<div class="tb" style="left:1054px;top:492px;width:45px;height:20px;line-height:19px">3mm</div>
<div class="a" style="left:1104px;top:478px;width:31px;height:19px;border-top:2px solid #a0a0a0;border-left:2px solid #a0a0a0;border-right:1px solid #fff;border-bottom:1px solid #fff"></div>
<div class="btn" style="left:1107px;top:481px;width:26px;height:14px;line-height:13px;font-size:11px">All</div>

<div class="a ms" style="left:850px;top:522px;width:75px;text-align:right">Top Reveal</div>
<div class="a ms" style="left:850px;top:546px;width:75px;text-align:right">Left Reveal</div>
<div class="a ms" style="left:850px;top:570px;width:75px;text-align:right">Right Reveal</div>
<div class="a ms" style="left:850px;top:595px;width:75px;text-align:right">Bottom Reveal</div>
<div class="tb" style="left:931px;top:522px;width:60px;height:20px;line-height:19px">3mm</div>
<div class="tb" style="left:931px;top:546px;width:60px;height:20px;line-height:19px">1.5mm</div>
<div class="tb" style="left:931px;top:570px;width:60px;height:20px;line-height:19px">1.5mm</div>
<div class="tb" style="left:931px;top:595px;width:60px;height:20px;line-height:19px">0mm</div>

<div class="a ms" style="left:1034px;top:531px">Slab Grain Direction</div>
<div class="tb" style="left:1043px;top:552px;width:41px;height:20px;line-height:19px;text-align:left;padding-left:3px">0</div>
<svg class="a" style="left:1020px;top:582px" width="100" height="26" viewBox="0 0 100 26">
<path d="M6.5 1.5V5.5M26.5 3V5.5M47.5 3V5.5M67.5 3V5.5M87.5 1.5V5.5" stroke="#999" stroke-width="1"/>
<rect x="8.5" y="13.5" width="84" height="3" fill="#e7eaea" stroke="#d6d6d6"/>
<path d="M2 10 L6.5 6 L11 10 V20 H2 Z" fill="#0078d7"/>
</svg>

<div class="a ms" style="left:800px;top:622px;width:185px;text-align:right">Hinge Center to Top :</div>
<div class="a ms" style="left:800px;top:643px;width:185px;text-align:right">Hinge Center to Bottom :</div>
<div class="a ms" style="left:800px;top:663px;width:185px;text-align:right">Max Distance Between Hinges :</div>
<div class="a ms" style="left:800px;top:682px;width:185px;text-align:right">Location Offset for Center Hinge(s):</div>
<div class="tb" style="left:989px;top:622px;width:60px;height:20px;line-height:19px">76.2mm</div>
<div class="tb" style="left:989px;top:642px;width:60px;height:20px;line-height:19px">76.2mm</div>
<div class="tb" style="left:989px;top:662px;width:60px;height:20px;line-height:19px">0mm</div>
<div class="tb" style="left:989px;top:681px;width:60px;height:20px;line-height:19px">0mm</div>

<div class="btn" style="left:873px;top:792px;width:73px;height:21px;line-height:17px;border:2px solid #1a65b5;box-shadow:inset 0 0 0 1px #d4f0ff">OK</div>
<div class="btn" style="left:956px;top:792px;width:73px;height:21px;line-height:19px">Cancel</div>
<div class="a ms" style="left:803px;top:824px;width:300px;text-align:center;line-height:13px;white-space:normal">To skip this dialog and accept the default settings,<br>hold down the ""Shift"" key when adding doors or<br>drawers!</div>
</div>

<!-- status bar -->
<div class="a" style="left:0;top:1179px;width:1920px;height:19px;background:#f0f0f0"></div>
<div class="a" style="left:0;top:1180px;width:1920px;height:1px;background:#d9d9d9"></div>
<div class="a" style="left:205px;top:1182px;width:1px;height:15px;background:#c8c8c8"></div>
<div class="a" style="left:1711px;top:1182px;width:1px;height:15px;background:#c8c8c8"></div>
<div class="a" style="left:1749px;top:1185px;font-size:11.8px;white-space:nowrap">F1 for Help (Learning Mode ON)</div>
<div class="a" style="left:0;top:1198px;width:1920px;height:2px;background:#262626"></div>
<div class="a" style="left:48px;top:1198px;width:344px;height:2px;background:#d8d8d8"></div>
</body></html>
